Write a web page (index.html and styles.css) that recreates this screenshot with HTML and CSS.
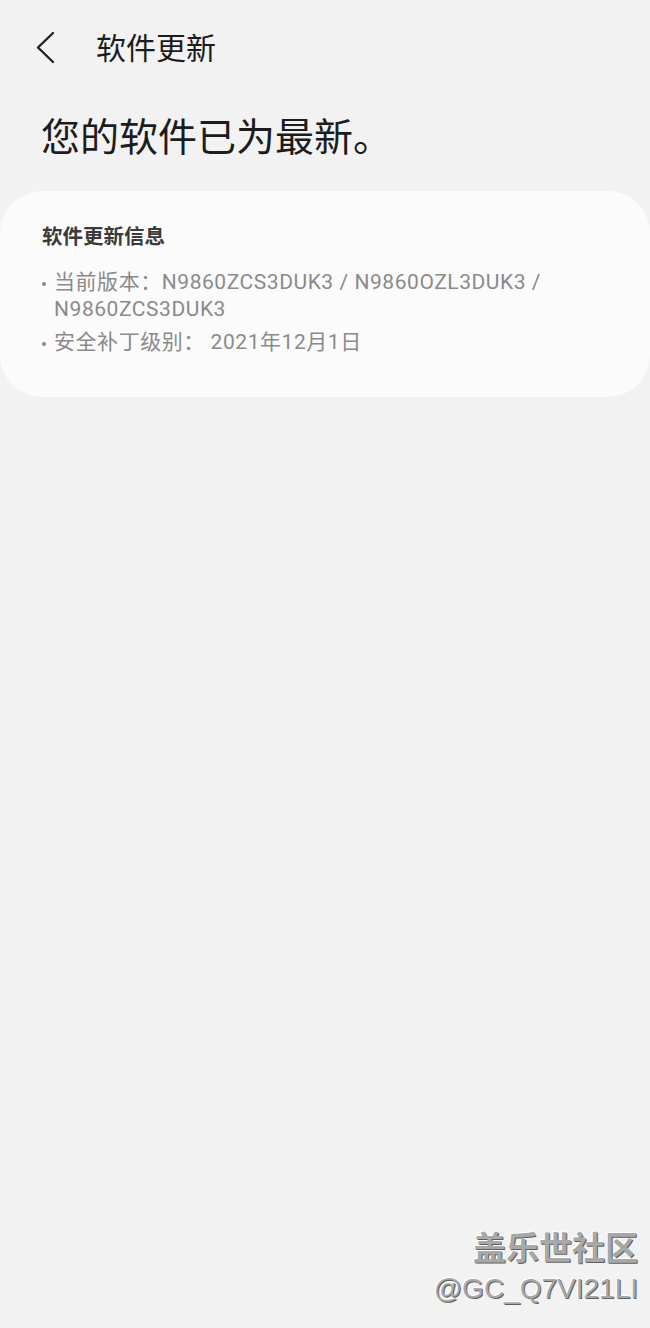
FILE: index.html
```html
<!DOCTYPE html>
<html lang="zh-CN">
<head>
<meta charset="utf-8">
<link rel="stylesheet" href="styles.css">
</head>
<body>
<div class="page">
  <header class="topbar">
    <svg class="back" width="24" height="34" viewBox="0 0 24 34"><path d="M17 2 L2 16.5 L17 31" fill="none" stroke="#222" stroke-width="2.4" stroke-linecap="round" stroke-linejoin="round"/></svg>
    <span class="title">软件更新</span>
  </header>
  <h1 class="status">您的软件已为最新。</h1>
  <section class="card">
    <h2 class="card-title">软件更新信息</h2>
    <ul class="info">
      <li class="code-line">当前版本：N9860ZCS3DUK3 / N9860OZL3DUK3 / N9860ZCS3DUK3</li>
      <li class="code-line">安全补丁级别： 2021年12月1日</li>
    </ul>
  </section>
  <div class="spacer"></div>
  <div class="watermark">
    <div class="wm-name">盖乐世社区</div>
    <div class="wm-id">@GC_Q7VI21LI</div>
  </div>
</div>
</body>
</html>
```
FILE: styles.css
```css
html, body {
  margin: 0;
  padding: 0;
  background: #f2f2f2;
}
body {
  font-family: Roboto, "Noto Sans CJK SC", sans-serif;
  color: #222;
}
.page {
  width: 650px;
  height: 1328px;
  display: flex;
  flex-direction: column;
}
.topbar {
  display: flex;
  align-items: center;
  height: 96px;
  padding-left: 36px;
  box-sizing: border-box;
}
.back {
  display: block;
}
.title {
  margin-left: 36px;
  font-size: 30px;
  line-height: 40px;
  color: #1c1c1c;
  padding-top: 2px;
}
.status {
  margin: 15px 0 0 41px;
  font-size: 39px;
  font-weight: 400;
  line-height: 54px;
  color: #1c1c1c;
}
.card {
  margin-top: 26px;
  background: #fbfbfb;
  border-radius: 42px;
  padding: 30px 42px 36px;
  height: 206px;
  box-sizing: border-box;
}
.card-title {
  margin: 0;
  font-size: 20.5px;
  font-weight: 700;
  line-height: 32px;
  color: #3a3a3a;
}
.info {
  list-style: none;
  margin: 16px 0 0;
  padding: 0;
  color: #8a8a8a;
  font-size: 21px;
  line-height: 27px;
}
.info li {
  position: relative;
  padding-left: 12px;
  margin-bottom: 6px;
  padding-right: 40px;
}
.info li::before {
  content: "";
  position: absolute;
  left: 0;
  top: 13px;
  width: 4px;
  height: 4px;
  border-radius: 50%;
  background: #8a8a8a;
}
.code-line {
  letter-spacing: 0.55px;
}
.spacer {
  flex: 1;
}
.watermark {
  align-self: flex-end;
  margin-right: 12px;
  margin-bottom: 20px;
  text-align: right;
  color: #a8a8a8;
  text-shadow: 1px 1px 0 #5f5f5f, -1px -1px 0 #ffffff;
}
.wm-name {
  font-size: 33px;
  font-weight: 700;
  line-height: 42px;
}
.wm-id {
  font-family: "Liberation Sans", Arial, sans-serif;
  font-size: 28px;
  line-height: 38px;
}
```
